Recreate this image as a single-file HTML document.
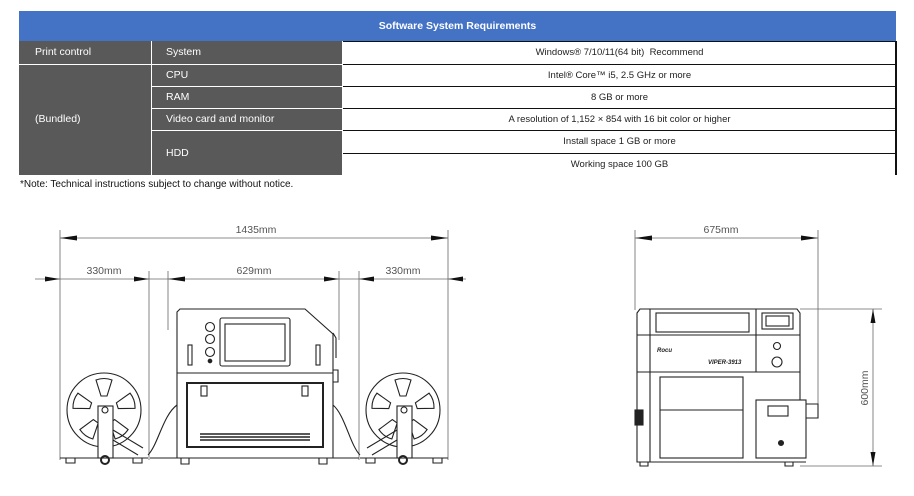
<!DOCTYPE html>
<html><head><meta charset="utf-8"><style>
body{margin:0;width:914px;height:496px;background:#fff;font-family:"Liberation Sans",sans-serif;overflow:hidden;position:relative}
.hdr{position:absolute;left:19px;top:11px;width:877px;height:30px;background:#4472c4;color:#fff;font-weight:bold;font-size:10.5px;text-align:center;line-height:30px}
.g{position:absolute;background:#595959;color:#fff;font-size:10.5px}
.w{position:absolute;left:343px;width:553px;font-size:9.5px;color:#222;text-align:center;border-top:1.5px solid #111;box-sizing:border-box}
.note{position:absolute;left:20px;top:179px;font-size:10px;color:#111}
svg{position:absolute;left:0;top:0}
</style></head><body>
<div class="hdr">Software System Requirements</div>
<div class="g" style="left:19px;top:41px;width:132px;height:23px;line-height:23px;padding-left:16px;box-sizing:border-box">Print control</div>
<div class="g" style="left:19px;top:65px;width:132px;height:110px;line-height:108px;padding-left:16px;box-sizing:border-box">(Bundled)</div>
<div class="g" style="left:152px;top:41px;width:190px;height:23px;line-height:23px;padding-left:14px;box-sizing:border-box">System</div>
<div class="g" style="left:152px;top:65px;width:190px;height:21px;line-height:21px;padding-left:14px;box-sizing:border-box">CPU</div>
<div class="g" style="left:152px;top:87px;width:190px;height:21px;line-height:21px;padding-left:14px;box-sizing:border-box">RAM</div>
<div class="g" style="left:152px;top:109px;width:190px;height:21px;line-height:21px;padding-left:14px;box-sizing:border-box">Video card and monitor</div>
<div class="g" style="left:152px;top:131px;width:190px;height:44px;line-height:44px;padding-left:14px;box-sizing:border-box">HDD</div>
<div class="w" style="top:41px;height:23px;line-height:22px">Windows® 7/10/11(64 bit)&nbsp; Recommend</div>
<div class="w" style="top:64px;height:22px;line-height:21px">Intel® Core™ i5, 2.5 GHz or more</div>
<div class="w" style="top:86px;height:22px;line-height:21px">8 GB or more</div>
<div class="w" style="top:108px;height:22px;line-height:21px">A resolution of 1,152 × 854 with 16 bit color or higher</div>
<div class="w" style="top:130px;height:23px;line-height:22px">Install space 1 GB or more</div>
<div class="w" style="top:153px;height:22px;line-height:21px">Working space 100 GB</div>
<div style="position:absolute;left:895px;top:41px;width:1.5px;height:134px;background:#111"></div>
<div class="note">*Note: Technical instructions subject to change without notice.</div>
<svg width="914" height="496" viewBox="0 0 914 496" fill="none" stroke="#333" stroke-width="1">
<g stroke="#666" stroke-width="0.8">
<line x1="60" y1="230" x2="60" y2="460"/><line x1="448" y1="230" x2="448" y2="460"/>
<line x1="60" y1="238" x2="448" y2="238"/>
<line x1="35" y1="279" x2="466" y2="279"/>
<line x1="149" y1="271" x2="149" y2="460"/><line x1="168" y1="271" x2="168" y2="330"/>
<line x1="339" y1="271" x2="339" y2="340"/><line x1="359" y1="271" x2="359" y2="460"/>
<line x1="635" y1="230" x2="635" y2="310"/><line x1="818" y1="230" x2="818" y2="410"/>
<line x1="635" y1="238" x2="818" y2="238"/>
<line x1="800" y1="309" x2="882" y2="309"/><line x1="800" y1="466" x2="882" y2="466"/>
<line x1="873" y1="309" x2="873" y2="466"/>
</g>
<g fill="#111" stroke="none">
<path d="M60 238l17-2.5v5zM448 238l-17-2.5v5zM60 279l-15-2.5v5zM149 279l-15-2.5v5zM168 279l17-2.5v5zM339 279l-15-2.5v5zM359 279l15-2.5v5zM448 279l15-2.5v5zM635 238l17-2.5v5zM818 238l-17-2.5v5zM873 309l-2.5 14h5zM873 466l-2.5-14h5z"/>
</g>
<g fill="#555" stroke="none" font-family="Liberation Sans, sans-serif" font-size="10.5">
<text x="256" y="233" text-anchor="middle">1435mm</text>
<text x="104" y="274" text-anchor="middle">330mm</text>
<text x="254" y="274" text-anchor="middle">629mm</text>
<text x="403" y="274" text-anchor="middle">330mm</text>
<text x="721" y="233" text-anchor="middle">675mm</text>
<text transform="translate(868 388) rotate(-90)" text-anchor="middle">600mm</text>
</g>
<!-- left printer -->
<g stroke="#222" stroke-width="1.1">
<path d="M177 312l3-3h125l28 25v124h-156z"/>
<line x1="177" y1="373" x2="333" y2="373"/>
<rect x="220" y="318" width="70" height="48" rx="2"/>
<rect x="225" y="324" width="60" height="37"/>
<circle cx="210" cy="327" r="4.5"/><circle cx="210" cy="339" r="4.5"/><circle cx="210" cy="352" r="4.5"/>
<circle cx="210" cy="361" r="1.8" fill="#222"/>
<rect x="188" y="345" width="4" height="20"/><rect x="316" y="345" width="4" height="20"/>
<rect x="187" y="383" width="136" height="64" stroke-width="2"/>
<rect x="201" y="386" width="6" height="10"/><rect x="302" y="386" width="6" height="10"/>
<path d="M200 434h110M200 437h110M200 440h110" stroke-width="1.6"/>
<path d="M181 458v6h8v-6M319 458v6h8v-6"/>
<path d="M333 333l3 5v20M333 370h5v12h-5"/>
<path d="M150 458h27M333 458h26"/>
</g>
<g stroke="#222" stroke-width="1.1">
<circle cx="104" cy="410" r="37"/><circle cx="403" cy="410" r="37"/>
<g transform="translate(104 410)"><path id="sp" d="M-8-30Q0-33 8-30L3-14h-6z"/><path d="M-8-30Q0-33 8-30L3-14h-6z" transform="rotate(72)"/><path d="M-8-30Q0-33 8-30L3-14h-6z" transform="rotate(144)"/><path d="M-8-30Q0-33 8-30L3-14h-6z" transform="rotate(216)"/><path d="M-8-30Q0-33 8-30L3-14h-6z" transform="rotate(288)"/></g>
<g transform="translate(403 410)"><path d="M-8-30Q0-33 8-30L3-14h-6z"/><path d="M-8-30Q0-33 8-30L3-14h-6z" transform="rotate(72)"/><path d="M-8-30Q0-33 8-30L3-14h-6z" transform="rotate(144)"/><path d="M-8-30Q0-33 8-30L3-14h-6z" transform="rotate(216)"/><path d="M-8-30Q0-33 8-30L3-14h-6z" transform="rotate(288)"/></g>
<rect x="98" y="406" width="15" height="52" fill="#fff"/><rect x="397" y="406" width="15" height="52" fill="#fff"/>
<circle cx="105" cy="410" r="3"/><circle cx="404" cy="410" r="3"/>
<circle cx="105" cy="460" r="4" stroke-width="2"/><circle cx="403" cy="460" r="4" stroke-width="2"/>
<path d="M113 430l30 18M113 440l25 15M397 430l-30 18M397 440l-25 15"/>
<line x1="60" y1="458" x2="148" y2="458"/><line x1="360" y1="458" x2="448" y2="458"/>
<path d="M66 458v5h9v-5M133 458v5h9v-5M366 458v5h9v-5M433 458v5h9v-5"/>
<path d="M148 455c10-10 15-40 29-50M360 455c-10-10-15-40-27-50"/>
</g>
<!-- right printer -->
<g stroke="#222" stroke-width="1.1">
<path d="M637 313l3-4h157l3 4v59h-163z"/>
<line x1="637" y1="335" x2="800" y2="335"/>
<line x1="650" y1="309" x2="650" y2="372"/><line x1="756" y1="309" x2="756" y2="372"/>
<rect x="656" y="313" width="93" height="19"/>
<rect x="762" y="313" width="31" height="16"/><rect x="766" y="316" width="23" height="10"/>
<circle cx="777" cy="346" r="3.5"/><circle cx="777" cy="362" r="5"/>
<path d="M637 372v90h169M650 372v90"/>
<rect x="660" y="377" width="83" height="81"/>
<line x1="660" y1="410" x2="743" y2="410"/>
<rect x="756" y="400" width="50" height="58"/>
<rect x="768" y="406" width="20" height="10"/>
<circle cx="781" cy="443" r="2.5" fill="#222"/>
<path d="M806 404h12v14h-12M800 372v28"/>
<path d="M640 462v4h8v-4M785 462v4h8v-4"/>
<rect x="635" y="410" width="8" height="15" fill="#222"/>
</g>
<g fill="#222" stroke="none" font-size="6" font-style="italic" font-weight="bold"><text x="657" y="352">Rocu</text><text x="708" y="364">VIPER-3913</text></g>
</svg>
</body></html>
